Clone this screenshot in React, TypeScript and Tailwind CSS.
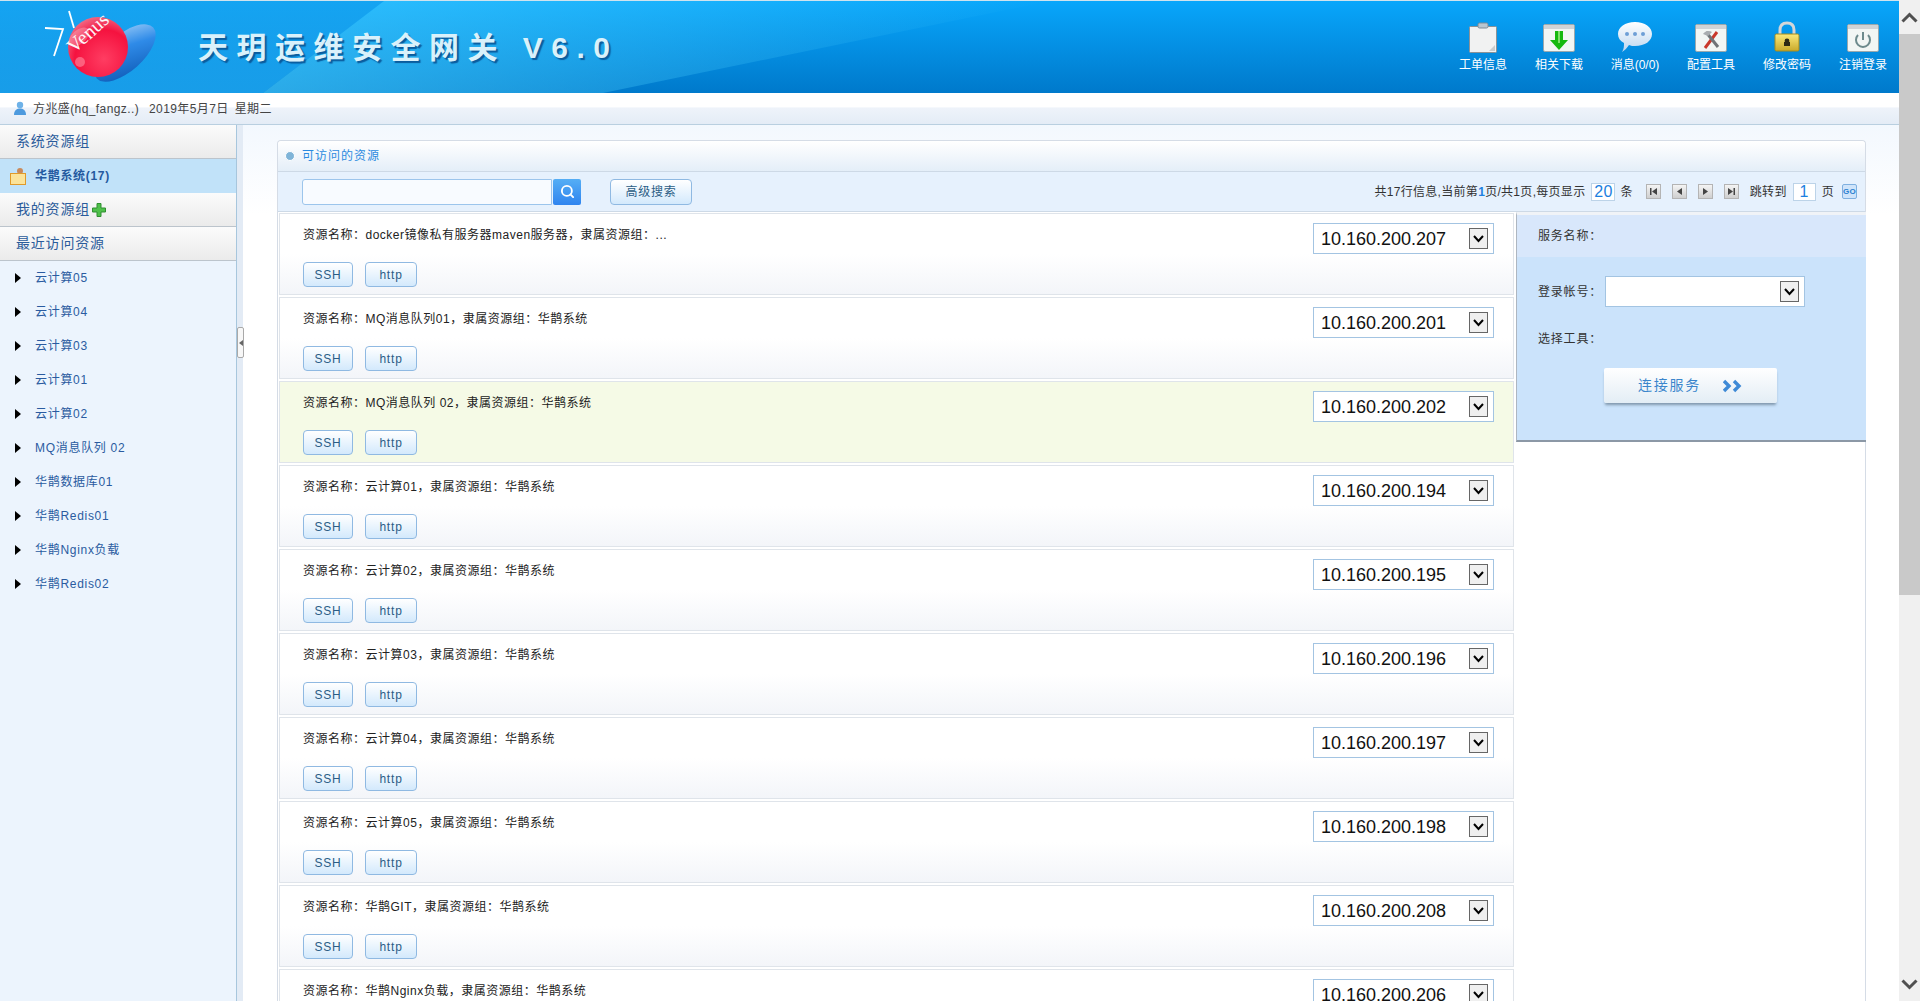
import { Search } from "lucide-react";

const sidebarItems = ["云计算05", "云计算04", "云计算03", "云计算01", "云计算02", "MQ消息队列 02", "华鹊数据库01", "华鹊Redis01", "华鹊Nginx负载", "华鹊Redis02"];

const resources = [
  { name: "docker镜像私有服务器maven服务器", group: "：...", ip: "10.160.200.207" },
  { name: "MQ消息队列01", group: "：华鹊系统", ip: "10.160.200.201" },
  { name: "MQ消息队列 02", group: "：华鹊系统", ip: "10.160.200.202", active: true },
  { name: "云计算01", group: "：华鹊系统", ip: "10.160.200.194" },
  { name: "云计算02", group: "：华鹊系统", ip: "10.160.200.195" },
  { name: "云计算03", group: "：华鹊系统", ip: "10.160.200.196" },
  { name: "云计算04", group: "：华鹊系统", ip: "10.160.200.197" },
  { name: "云计算05", group: "：华鹊系统", ip: "10.160.200.198" },
  { name: "华鹊GIT", group: "：华鹊系统", ip: "10.160.200.208" },
  { name: "华鹊Nginx负载", group: "：华鹊系统", ip: "10.160.200.206" },
];

function Logo() {
  return (
    <svg width="150" height="93" viewBox="0 0 150 93" className="shrink-0">
      <defs>
        <radialGradient id="ball" cx="0.6" cy="0.7" r="0.75">
          <stop offset="0" stopColor="#ff3d62" />
          <stop offset="0.65" stopColor="#f5123f" />
          <stop offset="1" stopColor="#f0718a" />
        </radialGradient>
        <linearGradient id="pill" x1="0" y1="1" x2="1" y2="0">
          <stop offset="0" stopColor="#0b55b0" />
          <stop offset="0.6" stopColor="#2f8be8" />
          <stop offset="1" stopColor="#a9d4fa" />
        </linearGradient>
      </defs>
      <ellipse cx="95" cy="52" rx="38" ry="18" transform="rotate(-42 95 52)" fill="url(#pill)" />
      <polyline points="15,27 33,28 24,55" fill="none" stroke="#fff" strokeWidth="1.8" />
      <polyline points="39,10 44,27" fill="none" stroke="#fff" strokeWidth="1.8" />
      <circle cx="68" cy="46" r="30" fill="url(#ball)" />
      <ellipse cx="49" cy="36" rx="12" ry="7" fill="#fff" opacity="0.25" transform="rotate(-40 49 36)" />
      <circle cx="50" cy="61" r="5" fill="#ff8ea4" opacity="0.6" />
      <text x="44" y="53" fill="#fff" fontSize="20" fontFamily="Liberation Serif, serif" transform="rotate(-42 44 53)" opacity="0.95">Venus</text>
    </svg>
  );
}

function IconWindow({ children }: { children: React.ReactNode }) {
  return (
    <svg width="32" height="30" viewBox="0 0 32 30">
      <rect x="0.5" y="1.5" width="31" height="27" rx="1.5" fill="#f2f6f4" stroke="#9aa8ad" />
      <rect x="1" y="2" width="30" height="4" fill="#d0d3d6" />
      {children}
    </svg>
  );
}

const navItems = [
  {
    label: "工单信息",
    icon: (
      <svg width="32" height="32" viewBox="0 0 32 32">
        <rect x="2.5" y="5.5" width="27" height="26" rx="1" fill="#f1f2f2" stroke="#8c9296" />
        <path d="M22 30 L28 24 L28 30 Z" fill="#c9ccce" />
        <rect x="11" y="2" width="10" height="5" rx="1.5" fill="#b9c6d0" stroke="#7e8b95" />
      </svg>
    ),
  },
  {
    label: "相关下载",
    icon: (
      <IconWindow>
        <path d="M12 8 H20 V17 H25 L16 27 L7 17 H12 Z" fill="#16b90f" />
        <path d="M15 8 H17 V20 H15 Z" fill="#7fe069" />
      </IconWindow>
    ),
  },
  {
    label: "消息(0/0)",
    icon: (
      <svg width="36" height="32" viewBox="0 0 36 32">
        <defs>
          <linearGradient id="bubble" x1="0" y1="0" x2="0" y2="1">
            <stop offset="0" stopColor="#ffffff" />
            <stop offset="1" stopColor="#bcd6f0" />
          </linearGradient>
        </defs>
        <path d="M18 1 C28 1 35 6 35 13 C35 20 28 25 18 25 C16 25 14 25 12 24 C10 27 8 29 5 31 C7 28 7 25 7 22 C3 20 1 17 1 13 C1 6 8 1 18 1 Z" fill="url(#bubble)" />
        <circle cx="10" cy="13" r="2" fill="#6e9fd6" />
        <circle cx="18" cy="13" r="2" fill="#6e9fd6" />
        <circle cx="26" cy="13" r="2" fill="#6e9fd6" />
      </svg>
    ),
  },
  {
    label: "配置工具",
    icon: (
      <IconWindow>
        <path d="M10 25 L22 9" stroke="#c9392b" strokeWidth="3" />
        <path d="M11 9 L23 24" stroke="#6f7477" strokeWidth="3" />
        <path d="M8 11 C10 8 14 7 17 9 L13 13 Z" fill="#a9adb0" />
      </IconWindow>
    ),
  },
  {
    label: "修改密码",
    icon: (
      <svg width="26" height="32" viewBox="0 0 26 32">
        <defs>
          <linearGradient id="lock" x1="0" y1="0" x2="0" y2="1">
            <stop offset="0" stopColor="#fbe97a" />
            <stop offset="1" stopColor="#c9a92a" />
          </linearGradient>
        </defs>
        <path d="M6 15 V9 C6 4 9 2 13 2 C17 2 20 4 20 9 V15" fill="none" stroke="#d4d6d8" strokeWidth="3" />
        <rect x="1" y="13" width="24" height="17" rx="1.5" fill="url(#lock)" stroke="#a58a1c" />
        <circle cx="13" cy="20" r="2.4" fill="#2f2a14" />
        <rect x="10" y="21" width="6" height="4" fill="#2f2a14" />
      </svg>
    ),
  },
  {
    label: "注销登录",
    icon: (
      <IconWindow>
        <path d="M11 12 A7 7 0 1 0 21 12" fill="none" stroke="#6d8a8c" strokeWidth="2" />
        <path d="M16 9 V17" stroke="#6d8a8c" strokeWidth="2" />
      </IconWindow>
    ),
  },
];

function Header() {
  return (
    <header className="relative flex h-[93px] shrink-0 items-center overflow-hidden border-t border-[#cfe3ee] bg-[linear-gradient(180deg,#08a6fb,#0079cb)]">
      <svg aria-hidden className="absolute inset-0 h-full w-full" viewBox="0 0 1899 93" preserveAspectRatio="none">
        <defs>
          <linearGradient id="sweep" x1="0" y1="0" x2="1" y2="0">
            <stop offset="0" stopColor="#4fd3ff" stopOpacity="0.55" />
            <stop offset="1" stopColor="#4fd3ff" stopOpacity="0" />
          </linearGradient>
          <linearGradient id="sweepLeft" x1="0" y1="0" x2="0" y2="1">
            <stop offset="0" stopColor="#1aa3ee" stopOpacity="0.7" />
            <stop offset="1" stopColor="#1ea6f0" stopOpacity="0.8" />
          </linearGradient>
        </defs>
        <polygon points="0,0 384,0 263,93 0,93" fill="url(#sweepLeft)" />
        <polygon points="384,0 1050,0 603,93 263,93" fill="url(#sweep)" />
      </svg>
      <div className="relative ml-[30px] flex items-center">
        <Logo />
        <h1 className="ml-[18px] whitespace-nowrap text-[30px] font-bold tracking-[8.5px] text-[#d9f1fb] [text-shadow:2px_2px_1px_#0a5c9e]">
          天玥运维安全网关 V6.0
        </h1>
      </div>
      <nav className="relative ml-auto flex gap-[28px] pr-[12px]">
        {navItems.map((item) => (
          <a key={item.label} className="flex w-[48px] flex-col items-center">
            <span className="flex h-[32px] items-end">{item.icon}</span>
            <span className="mt-[4px] whitespace-nowrap text-[12px] leading-[16px] text-white">{item.label}</span>
          </a>
        ))}
      </nav>
    </header>
  );
}

function UserBar() {
  return (
    <div className="flex h-[32px] shrink-0 items-center border-b border-[#b9cfe0] bg-[linear-gradient(180deg,#ffffff_0,#ffffff_45%,#eef3fa_48%,#e4ecf6_100%)] pl-[13px] text-[12px] tracking-[0.4px] text-[#444]">
      <svg width="14" height="15" viewBox="0 0 14 15" className="mr-[6px]">
        <circle cx="7" cy="4" r="3.2" fill="#6eb2e8" />
        <path d="M1 14 C1 9 4 7.5 7 7.5 C10 7.5 13 9 13 14 Z" fill="#4d9ade" />
      </svg>
      <span>方兆盛(hq_fangz..)</span>
      <span className="ml-[10px]">2019年5月7日</span>
      <span className="ml-[6px]">星期二</span>
    </div>
  );
}

function SideHeading({ children }: { children: React.ReactNode }) {
  return (
    <div className="flex h-[34px] items-center border-b border-[#bcc4cc] bg-[linear-gradient(180deg,#fbfbfb,#ebebeb)] pl-[16px] text-[14px] tracking-[0.8px] text-[#2b5c9b]">
      {children}
    </div>
  );
}

function Sidebar() {
  return (
    <aside className="relative flex w-[243px] shrink-0">
      <div className="flex w-[236px] flex-col border-r-0 bg-[#ecf4fd]">
        <SideHeading>系统资源组</SideHeading>
        <div className="flex h-[34px] items-center bg-[#c1e2f9] pl-[10px] text-[12px] font-bold tracking-[0.7px] text-[#24599f]">
          <svg width="17" height="18" viewBox="0 0 17 18" className="mr-[8px]">
            <circle cx="10" cy="4" r="3" fill="#c98a5c" />
            <rect x="6" y="7" width="8" height="5" fill="#4d8fd0" />
            <rect x="0.5" y="6.5" width="15" height="11" fill="#fbe39a" stroke="#e09a2a" />
          </svg>
          华鹊系统(17)
        </div>
        <SideHeading>
          我的资源组
          <svg width="14" height="14" viewBox="0 0 14 14" className="ml-[2px]">
            <path d="M5 0.5 H9 V5 H13.5 V9 H9 V13.5 H5 V9 H0.5 V5 H5 Z" fill="#4fc04a" stroke="#2f8f30" />
          </svg>
        </SideHeading>
        <SideHeading>最近访问资源</SideHeading>
        <ul>
          {sidebarItems.map((item) => (
            <li key={item} className="flex h-[34px] items-center pl-[15px] text-[12px] tracking-[0.7px] text-[#2a5ba0]">
              <span className="mr-[14px] h-0 w-0 border-y-[5px] border-l-[6px] border-y-transparent border-l-black" />
              {item}
            </li>
          ))}
        </ul>
      </div>
      <div className="w-[7px] border-l border-[#a7c6dd] bg-[#e3ebf5]" />
      <div className="absolute left-[237px] top-[202px] flex h-[31px] w-[7px] items-center justify-center rounded-[2px] border border-[#a9a9a9] bg-[#f7f7f7]">
        <span className="h-0 w-0 border-y-[3px] border-r-[4px] border-y-transparent border-r-[#666]" />
      </div>
    </aside>
  );
}

function Btn({ children, className = "" }: { children: React.ReactNode; className?: string }) {
  return (
    <button className={`flex items-center justify-center rounded-[4px] border border-[#8fb9e2] bg-[linear-gradient(180deg,#ffffff,#d3e9fc)] text-[12px] tracking-[0.8px] text-[#2b5d85] ${className}`}>
      {children}
    </button>
  );
}

function Dropdown({ value, className = "" }: { value?: string; className?: string }) {
  return (
    <div className={`flex h-[31px] items-center border border-[#a3c4e2] bg-white pl-[7px] pr-[5px] text-[18px] leading-none text-[#111] ${className}`}>
      <span>{value}</span>
      <span className="ml-auto flex h-[21px] w-[19px] items-center justify-center border border-[#666] bg-[#efefef]">
        <svg width="11" height="8" viewBox="0 0 11 8">
          <path d="M1 1 L5.5 6 L10 1" fill="none" stroke="#000" strokeWidth="2" />
        </svg>
      </span>
    </div>
  );
}

function PageBtn({ d }: { d: string }) {
  return (
    <span className="flex h-[15px] w-[15px] items-center justify-center border border-[#b4b4b4] bg-[linear-gradient(180deg,#f4f4f4,#cfcfcf)]">
      <svg width="9" height="9" viewBox="0 0 9 9">
        <path d={d} fill="#444" />
      </svg>
    </span>
  );
}

function PageInput({ value, className }: { value: string; className: string }) {
  return (
    <span className={`flex h-[18px] items-center justify-center border border-[#bcd3e8] bg-white text-[16px] leading-none text-[#1c7fe0] ${className}`}>
      {value}
    </span>
  );
}

function Toolbar() {
  return (
    <div className="flex h-[41px] items-center border-y border-[#cdd9e6] bg-[#e6f1fd] pl-[24px] pr-[8px]">
      <div className="h-[26px] w-[250px] rounded-l-[3px] border border-[#9cc5ec] bg-[#f8fbff]" />
      <button className="ml-[1px] flex h-[26px] w-[28px] items-center justify-center rounded-[2px] bg-[linear-gradient(180deg,#55aef5,#2f84ef)] text-white">
        <Search size={15} strokeWidth={3} />
      </button>
      <Btn className="ml-[29px] h-[26px] w-[82px]">高级搜索</Btn>
      <div className="ml-auto flex items-center whitespace-nowrap text-[12px] tracking-[0.3px] text-[#333]">
        <span>共17行信息,当前第<b className="font-bold text-[#1c7fe0]">1</b>页/共1页,每页显示</span>
        <PageInput value="20" className="ml-[6px] w-[24px]" />
        <span className="ml-[5px]">条</span>
        <div className="ml-[13px] flex gap-[11px]">
          <PageBtn d="M1 1 H2.5 V8 H1 Z M8 1 V8 L3 4.5 Z" />
          <PageBtn d="M7 1 V8 L2 4.5 Z" />
          <PageBtn d="M2 1 V8 L7 4.5 Z" />
          <PageBtn d="M6.5 1 H8 V8 H6.5 Z M1 1 V8 L6 4.5 Z" />
        </div>
        <span className="ml-[11px]">跳转到</span>
        <PageInput value="1" className="ml-[6px] w-[23px]" />
        <span className="ml-[6px]">页</span>
        <span className="ml-[8px] flex h-[15px] w-[15px] items-center justify-center rounded-[2px] border border-[#7fb0e0] bg-[#cfe4fa] text-[8px] font-bold text-[#2a7fd0]">GO</span>
      </div>
    </div>
  );
}

function ResourceCard({ name, group, ip, active }: { name: string; group: string; ip: string; active?: boolean }) {
  return (
    <div className={`flex h-[82px] shrink-0 border border-[#dfe4ea] pl-[23px] pr-[19px] ${active ? "bg-[#f5fae6]" : "bg-[linear-gradient(180deg,#ffffff_50%,#f3f5f9)]"}`}>
      <div className="flex flex-col">
        <p className="mt-[12px] h-[18px] text-[12px] leading-[18px] tracking-[0.5px] text-[#222]">
          资源名称：{name}，隶属资源组{group}
        </p>
        <div className="mt-[18px] flex gap-[12px]">
          <Btn className="h-[25px] w-[50px]">SSH</Btn>
          <Btn className="h-[25px] w-[52px]">http</Btn>
        </div>
      </div>
      <Dropdown value={ip} className="ml-auto mt-[9px] w-[181px]" />
    </div>
  );
}

function ConnectPanel() {
  return (
    <div className="h-[230px] w-[350px] shrink-0 border-b-2 border-l border-t-[3px] border-b-[#8c98a6] border-l-[#aeb6c0] border-t-[#f0f3f7] text-[12px] tracking-[0.8px] text-[#333]">
      <div className="h-[42px] bg-[#d8e7fb] pl-[21px] pt-[12px] leading-[18px]">服务名称：</div>
      <div className="h-[183px] bg-[#cbe3fb] pl-[21px] pt-[19px]">
        <div className="flex items-center">
          <span className="w-[67px]">登录帐号：</span>
          <Dropdown className="w-[200px]" />
        </div>
        <div className="mt-[23px] leading-[18px]">选择工具：</div>
        <button className="ml-[66px] mt-[20px] flex h-[35px] w-[173px] items-center justify-center rounded-[2px] bg-[linear-gradient(180deg,#ffffff,#e3edf5)] text-[14px] tracking-[1.8px] text-[#3b86cc] shadow-[0_3px_3px_-1px_#7f96ab]">
          连接服务
          <svg width="20" height="14" viewBox="0 0 20 14" className="ml-[22px]">
            <path d="M1 2 L6 7 L1 12 M11 2 L16 7 L11 12" fill="none" stroke="#3f8ad6" strokeWidth="3.4" />
          </svg>
        </button>
      </div>
    </div>
  );
}

function ResourcePanel() {
  return (
    <section className="ml-[34px] mt-[15px] flex w-[1589px] flex-col rounded-t-[4px] border-x border-t border-[#d5dce6] bg-white">
      <div className="relative flex h-[30px] shrink-0 items-center overflow-hidden rounded-t-[4px] bg-[linear-gradient(180deg,#ffffff,#e4eef8)] pl-[7px] text-[12px] tracking-[1px] text-[#2c8be0]">
        <span className="mr-[7px] h-[10px] w-[10px] rounded-full border border-white bg-[#7fb4d8]" />
        可访问的资源
      </div>
      <Toolbar />
      <div className="flex gap-[2px] pl-[1px]">
        <div className="flex w-[1235px] shrink-0 flex-col gap-[2px] pt-[1px]">
          {resources.map((r) => (
            <ResourceCard key={r.ip} {...r} />
          ))}
        </div>
        <ConnectPanel />
      </div>
    </section>
  );
}

function Scrollbar() {
  return (
    <div className="flex w-[21px] shrink-0 flex-col bg-[#f0f0f0]">
      <div className="flex h-[34px] items-center justify-center">
        <svg width="17" height="11" viewBox="0 0 17 11">
          <path d="M1.5 9.5 L8.5 2.5 L15.5 9.5" fill="none" stroke="#505050" strokeWidth="3" />
        </svg>
      </div>
      <div className="h-[561px] bg-[#c9c9c9]" />
      <div className="mt-auto flex h-[34px] items-center justify-center">
        <svg width="17" height="11" viewBox="0 0 17 11">
          <path d="M1.5 1.5 L8.5 8.5 L15.5 1.5" fill="none" stroke="#505050" strokeWidth="3" />
        </svg>
      </div>
    </div>
  );
}

export default function App() {
  return (
    <div className="flex h-[1001px] w-[1920px] overflow-hidden bg-white font-['Liberation_Sans','Noto_Sans_CJK_SC',sans-serif]">
      <div className="flex w-[1899px] shrink-0 flex-col">
        <Header />
        <UserBar />
        <div className="flex min-h-0 flex-1">
          <Sidebar />
          <main className="flex-1 overflow-hidden bg-[linear-gradient(180deg,#f3f8fe_0,#ffffff_90px)]">
            <ResourcePanel />
          </main>
        </div>
      </div>
      <Scrollbar />
    </div>
  );
}
